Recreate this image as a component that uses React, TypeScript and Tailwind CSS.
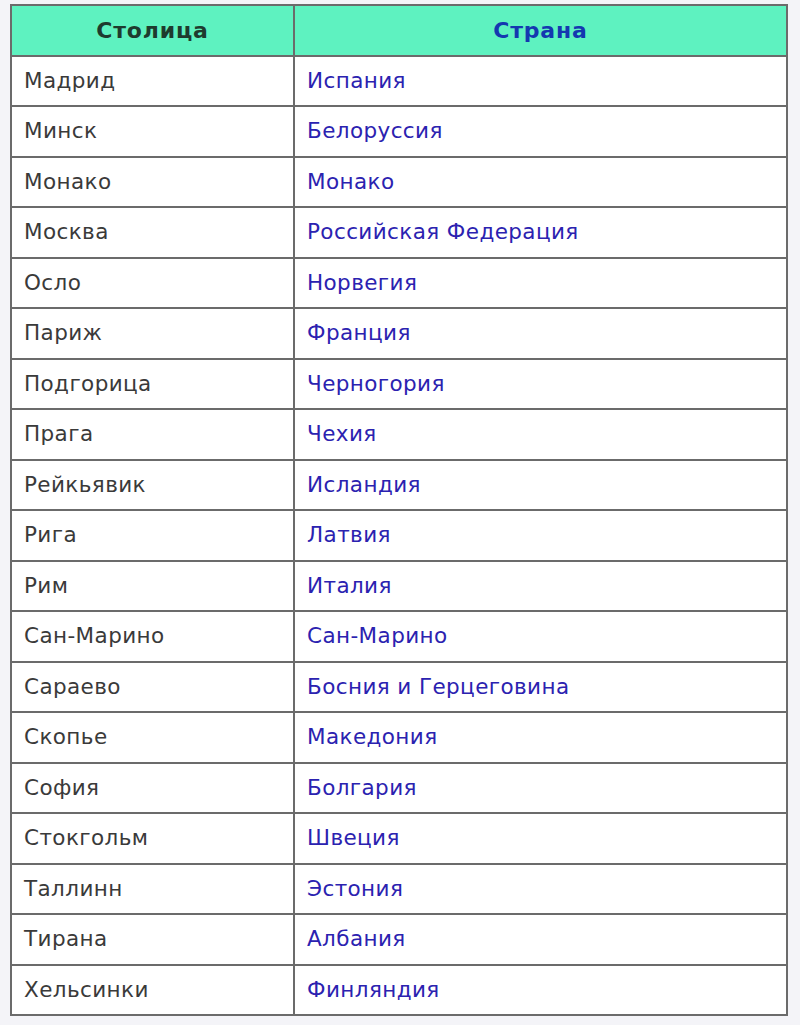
import React from "react";

const rows: [string, string][] = [
    ["Мадрид", "Испания"],
    ["Минск", "Белоруссия"],
    ["Монако", "Монако"],
    ["Москва", "Российская Федерация"],
    ["Осло", "Норвегия"],
    ["Париж", "Франция"],
    ["Подгорица", "Черногория"],
    ["Прага", "Чехия"],
    ["Рейкьявик", "Исландия"],
    ["Рига", "Латвия"],
    ["Рим", "Италия"],
    ["Сан-Марино", "Сан-Марино"],
    ["Сараево", "Босния и Герцеговина"],
    ["Скопье", "Македония"],
    ["София", "Болгария"],
    ["Стокгольм", "Швеция"],
    ["Таллинн", "Эстония"],
    ["Тирана", "Албания"],
    ["Хельсинки", "Финляндия"],
];

const App = () => {
    return (
        <div className="min-h-screen bg-[#f4f4f8] pt-[4px] pl-[10px] font-['DejaVu_Sans',Verdana,sans-serif]">
            <table className="w-[778px] border-collapse border-2 border-[#6b6b6b] bg-white text-[21.5px] tracking-[0.4px]">
                <thead>
                    <tr className="h-[50.5px] bg-[#5ef2c0]">
                        <th className="w-[283px] border-2 border-[#6b6b6b] text-center text-[22px] font-bold tracking-[0.8px] text-[#1e3b2e]">
                            Столица
                        </th>
                        <th className="border-2 border-[#6b6b6b] text-center text-[22px] font-bold tracking-[0.8px] text-[#1438b0]">
                            Страна
                        </th>
                    </tr>
                </thead>
                <tbody>
                    {rows.map(([city, country]) => (
                        <tr key={city} className="h-[50.5px]">
                            <td className="border-2 border-[#6b6b6b] pl-[12px] text-[#3a3a3a]">{city}</td>
                            <td className="border-2 border-[#6b6b6b] pl-[12px] text-[#2b22b0]">{country}</td>
                        </tr>
                    ))}
                </tbody>
            </table>
        </div>
    );
};

export default App;
